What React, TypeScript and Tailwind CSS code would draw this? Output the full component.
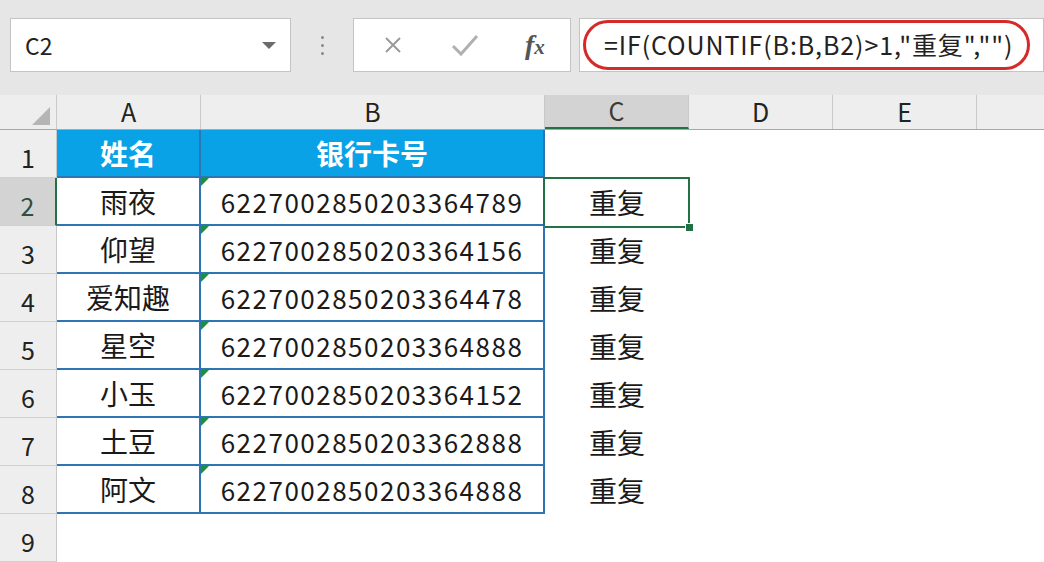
const font = { fontFamily: '"Noto Sans CJK SC", "Noto Sans", sans-serif' }

const rows = [
  { name: '雨夜', card: '6227002850203364789' },
  { name: '仰望', card: '6227002850203364156' },
  { name: '爱知趣', card: '6227002850203364478' },
  { name: '星空', card: '6227002850203364888' },
  { name: '小玉', card: '6227002850203364152' },
  { name: '土豆', card: '6227002850203362888' },
  { name: '阿文', card: '6227002850203364888' },
]

function FormulaBar() {
  return (
    <div className="flex h-[95px] items-start bg-[#e6e6e6] pt-[18px]">
      <div className="ml-[10px] flex h-[54px] w-[281px] items-center justify-between border border-[#c4c4c4] bg-white pl-[14px] pr-[14px]">
        <span className="text-[23px] text-[#222]">C2</span>
        <span className="h-0 w-0 border-x-[7px] border-t-[7px] border-x-transparent border-t-[#6b6b6b]"></span>
      </div>
      <div className="flex h-[54px] w-[62px] flex-col items-center justify-center gap-[5px]">
        <span className="h-[3px] w-[3px] rounded-full bg-[#8a8a8a]"></span>
        <span className="h-[3px] w-[3px] rounded-full bg-[#8a8a8a]"></span>
        <span className="h-[3px] w-[3px] rounded-full bg-[#8a8a8a]"></span>
      </div>
      <div className="flex h-[54px] w-[218px] items-center border border-[#c4c4c4] bg-white">
        <svg width="20" height="20" viewBox="0 0 20 20" className="ml-[29px]">
          <path d="M3 3 L17 17 M17 3 L3 17" stroke="#9a9a9a" strokeWidth="2" fill="none" />
        </svg>
        <svg width="28" height="24" viewBox="0 0 28 24" className="ml-[48px]">
          <path d="M2 13 L10 21 L26 3" stroke="#b0b0b0" strokeWidth="3" fill="none" />
        </svg>
        <span className="ml-[46px] italic text-[#555]" style={{ fontFamily: '"Liberation Serif", serif' }}>
          <span className="text-[28px] font-bold">f</span>
          <span className="text-[21px] font-bold">x</span>
        </span>
      </div>
      <div className="relative ml-[8px] flex h-[54px] flex-1 items-center border border-[#c4c4c4] bg-white pl-[24px]">
        <span className="text-[25px] tracking-[0.9px] text-[#222]">=IF(COUNTIF(B:B,B2)&gt;1,"重复","")</span>
        <div className="absolute left-[3px] right-[13px] top-[1px] bottom-[1px] rounded-[26px] border-[3px] border-[#d42a2a]"></div>
      </div>
    </div>
  )
}

function ColHeader() {
  const cols = [
    { l: 'A', w: 'w-[144px]' },
    { l: 'B', w: 'w-[344px]' },
    { l: 'C', w: 'w-[144px]', sel: true },
    { l: 'D', w: 'w-[144px]' },
    { l: 'E', w: 'w-[144px]' },
  ]
  return (
    <div className="flex h-[35px] border-b border-[#a8a8a8] bg-[#eeeeee]">
      <div className="relative w-[57px] border-r border-[#c8c8c8]">
        <span className="absolute bottom-[4px] right-[6px] h-0 w-0 border-b-[18px] border-l-[18px] border-b-[#b5b5b5] border-l-transparent"></span>
      </div>
      {cols.map((c) => (
        <div
          key={c.l}
          className={`${c.w} flex items-center justify-center border-r border-[#c8c8c8] text-[25px] ${
            c.sel ? 'border-b-2 border-b-[#217346] bg-[#d3d3d3] text-[#3a3a3a]' : 'text-[#222]'
          }`}
        >
          {c.l}
        </div>
      ))}
      <div className="flex-1"></div>
    </div>
  )
}

function RowNum({ n, sel }: { n: number; sel?: boolean }) {
  return (
    <div
      className={`flex w-[57px] shrink-0 items-end justify-center border-b border-[#cfcfcf] pb-[1px] text-[25px] ${
        sel ? 'border-r-2 border-r-[#217346] bg-[#d3d3d3] text-[#2f4f3f]' : 'border-r border-r-[#c8c8c8] bg-[#eeeeee] text-[#222]'
      }`}
    >
      {n}
    </div>
  )
}

export default function App() {
  return (
    <div className="h-[562px] w-[1044px] overflow-hidden bg-white" style={font}>
      <FormulaBar />
      <ColHeader />
      <div className="flex h-[48px]">
        <RowNum n={1} />
        <div className="flex w-[144px] items-center justify-center border-r-2 border-b-2 border-[#2e75b6] bg-[#0aa2e6] text-[28px] font-bold text-white">
          姓名
        </div>
        <div className="flex w-[344px] items-center justify-center border-r-2 border-b-2 border-[#2e75b6] bg-[#0aa2e6] text-[28px] font-bold text-white">
          银行卡号
        </div>
        <div className="flex-1"></div>
      </div>
      {rows.map((r, i) => (
        <div key={i} className="flex h-[48px]">
          <RowNum n={i + 2} sel={i === 0} />
          <div className="flex w-[144px] items-center justify-center border-r-2 border-b-2 border-[#2e75b6] text-[28px] text-[#1a1a1a]">
            {r.name}
          </div>
          <div className="relative flex w-[344px] items-center justify-center border-r-2 border-b-2 border-[#2e75b6] text-[26px] tracking-[1.5px] text-[#1a1a1a]">
            <span className="absolute left-0 top-0 h-0 w-0 border-t-[8px] border-r-[8px] border-t-[#1f8f3a] border-r-transparent"></span>
            {r.card}
          </div>
          <div className="relative flex w-[144px] items-center justify-center text-[28px] text-[#1a1a1a]">
            重复
            {i === 0 && (
              <>
                <div className="absolute -left-[2px] -top-[1px] h-[51px] w-[147px] border-2 border-[#217346]"></div>
                <div className="absolute -right-[5px] -bottom-[6px] h-[9px] w-[9px] border border-white bg-[#217346]"></div>
              </>
            )}
          </div>
          <div className="flex-1"></div>
        </div>
      ))}
      <div className="flex h-[48px]">
        <RowNum n={9} />
        <div className="flex-1"></div>
      </div>
    </div>
  )
}
